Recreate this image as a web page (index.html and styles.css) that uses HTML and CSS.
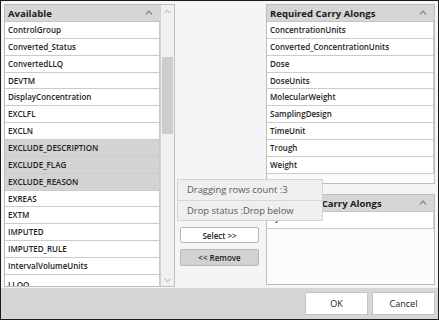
FILE: index.html
```html
<!DOCTYPE html>
<html>
<head>
<meta charset="utf-8">
<link rel="stylesheet" href="styles.css">
</head>
<body>
<div class="window">
  <div class="main">
    <div class="panel left">
      <div class="list">
        <div class="head"><span>Available</span><svg class="caret" width="8" height="5" viewBox="0 0 8 5"><path d="M1 4.5 L4 1 L7 4.5" fill="none" stroke="#8c8c8c" stroke-width="1.2"/></svg></div>
        <div class="row">ControlGroup</div>
        <div class="row">Converted_Status</div>
        <div class="row">ConvertedLLQ</div>
        <div class="row">DEVTM</div>
        <div class="row">DisplayConcentration</div>
        <div class="row">EXCLFL</div>
        <div class="row">EXCLN</div>
        <div class="row sel">EXCLUDE_DESCRIPTION</div>
        <div class="row sel">EXCLUDE_FLAG</div>
        <div class="row sel">EXCLUDE_REASON</div>
        <div class="row">EXREAS</div>
        <div class="row">EXTM</div>
        <div class="row">IMPUTED</div>
        <div class="row">IMPUTED_RULE</div>
        <div class="row">IntervalVolumeUnits</div>
        <div class="row last">LLOQ</div>
      </div>
      <div class="scroll">
        <svg class="arrow up" width="7" height="5" viewBox="0 0 7 5"><path d="M0.8 4 L3.5 1.2 L6.2 4" fill="none" stroke="#a8a8a8" stroke-width="1"/></svg>
        <div class="thumb"></div>
        <svg class="arrow down" width="7" height="5" viewBox="0 0 7 5"><path d="M0.8 1 L3.5 3.8 L6.2 1" fill="none" stroke="#a8a8a8" stroke-width="1"/></svg>
      </div>
    </div>
    <div class="middle">
      <button class="btn select">Select &gt;&gt;</button>
      <button class="btn remove">&lt;&lt; Remove</button>
      <div class="tooltip">
        <div class="tip-row">Dragging rows count :3</div>
        <div class="tip-row">Drop status :Drop below</div>
      </div>
    </div>
    <div class="right">
      <div class="panel req">
        <div class="head"><span>Required Carry Alongs</span><svg class="caret" width="8" height="5" viewBox="0 0 8 5"><path d="M1 4.5 L4 1 L7 4.5" fill="none" stroke="#8c8c8c" stroke-width="1.2"/></svg></div>
        <div class="row">ConcentrationUnits</div>
        <div class="row">Converted_ConcentrationUnits</div>
        <div class="row">Dose</div>
        <div class="row">DoseUnits</div>
        <div class="row">MolecularWeight</div>
        <div class="row">SamplingDesign</div>
        <div class="row">TimeUnit</div>
        <div class="row">Trough</div>
        <div class="row">Weight</div>
      </div>
      <div class="panel opt">
        <div class="head"><span>Additional Carry Alongs</span><svg class="caret" width="8" height="5" viewBox="0 0 8 5"><path d="M1 4.5 L4 1 L7 4.5" fill="none" stroke="#8c8c8c" stroke-width="1.2"/></svg></div>
        <div class="row peek">Cycle</div>
      </div>
    </div>
  </div>
  <div class="bar">
    <button class="dlg">OK</button>
    <button class="dlg">Cancel</button>
  </div>
</div>
</body>
</html>
```
FILE: styles.css
```css
html, body {
  margin: 0;
  padding: 0;
}
body {
  font-family: "Open Sans", "Noto Sans", sans-serif;
  color: #1e1e1e;
}
.window {
  width: 439px;
  height: 320px;
  box-sizing: border-box;
  border: 1px solid #1c1c1c;
  background: #f5f5f5;
  display: flex;
  flex-direction: column;
  overflow: hidden;
}
.main {
  display: flex;
  padding: 3px 3px 0 3px;
  height: 287px;
  box-sizing: border-box;
}
.panel {
  border: 1px solid #bdbdbd;
  box-sizing: border-box;
  background: #fbfbfb;
}
.left {
  width: 171px;
  height: 283px;
  display: flex;
}
.list {
  flex: 1;
  overflow: hidden;
}
.head {
  height: 17px;
  background: #d6d6d6;
  border-bottom: 1px solid #c4c4c4;
  box-sizing: border-box;
  display: flex;
  align-items: center;
  justify-content: space-between;
  padding: 0 7px 0 3px;
  font-weight: 700;
  font-size: 9.5px;
  color: #1a1a1a;
}
.caret {
  display: block;
  margin-top: -2px;
}
.row {
  height: 16.87px;
  box-sizing: border-box;
  background: #fff;
  border-bottom: 1px solid #cbcbcb;
  border-right: 1px solid #cbcbcb;
  font-size: 8px;
  font-weight: 600;
  line-height: 15px;
  padding-left: 3px;
  white-space: nowrap;
  color: #222;
}
.row.last {
  line-height: 19px;
}
.row.peek {
  line-height: 11px;
  height: 17px;
}
.row.sel {
  background: #d3d3d3;
}
.scroll {
  width: 13px;
  border-left: 1px solid #d0d0d0;
  background: #f0f0f0;
  display: flex;
  flex-direction: column;
  align-items: center;
}
.arrow {
  display: block;
}
.arrow.up {
  margin-top: 4px;
}
.thumb {
  width: 11px;
  height: 77px;
  background: #cdcdcd;
  margin-top: 43px;
}
.arrow.down {
  margin-top: auto;
  margin-bottom: 3px;
}
.middle {
  width: 91px;
  position: relative;
  padding: 223px 0 0 5px;
  box-sizing: border-box;
  display: flex;
  flex-direction: column;
  gap: 6px;
}
.btn {
  width: 79px;
  height: 16px;
  box-sizing: border-box;
  border: 1px solid #b8b8b8;
  border-radius: 2px;
  background: #fff;
  font-family: "Open Sans", sans-serif;
  font-size: 8px;
  font-weight: 600;
  color: #222;
  padding: 0;
}
.btn.remove {
  background: #d2d2d2;
  height: 17px;
}
.tooltip {
  position: absolute;
  left: 2px;
  top: 175px;
  width: 146px;
  height: 42px;
  box-sizing: border-box;
  border: 1px solid #d3d3d3;
  background: #efefef;
  z-index: 5;
}
.tip-row {
  height: 20px;
  box-sizing: border-box;
  padding-left: 9px;
  font-size: 9.4px;
  line-height: 20px;
  color: #585858;
}
.tip-row:first-child {
  height: 21px;
  border-bottom: 1px solid #d6d6d6;
}
.right {
  width: 169px;
  display: flex;
  flex-direction: column;
  gap: 10px;
}
.req {
  height: 180px;
}
.opt {
  height: 91px;
}
.bar {
  flex: 1;
  background: #d6d6d6;
  display: flex;
  justify-content: flex-end;
  align-items: center;
  gap: 4px;
  padding-right: 3px;
}
.dlg {
  width: 63px;
  height: 23px;
  box-sizing: border-box;
  border: 1px solid #c4c4c4;
  background: #fff;
  font-family: "Open Sans", sans-serif;
  font-size: 9px;
  color: #222;
  padding: 0;
}
```
